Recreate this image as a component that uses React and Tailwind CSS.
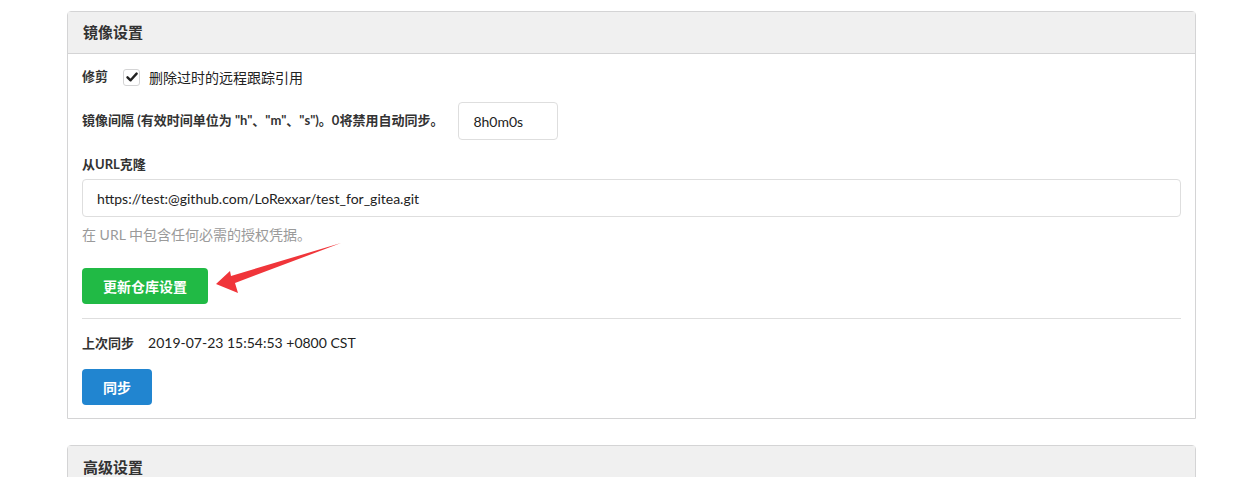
import React from "react";

const font = { fontFamily: "Lato, 'Noto Sans CJK SC', sans-serif" };

function Check() {
  return (
    <span className="flex h-[17px] w-[17px] items-center justify-center rounded-[3px] border border-[#d4d4d5] bg-white">
      <svg width="12" height="12" viewBox="0 0 12 12">
        <path d="M1.5 6.3 L4.6 9.3 L10.6 2.6" fill="none" stroke="#222" strokeWidth="2.4" strokeLinecap="round" strokeLinejoin="round" />
      </svg>
    </span>
  );
}

export default function App() {
  return (
    <div className="relative min-h-[477px] bg-white pl-[67px] pr-[51px] pt-[11px] text-[#333]" style={font}>
      <div className="rounded-t-[4px] border border-[#d4d4d5]">
        <div className="flex h-[42px] items-center border-b border-[#d4d4d5] bg-[#f0f0f0] px-[15px] text-[15px] font-bold">
          镜像设置
        </div>
        <div className="flex flex-col px-[14px] pb-[13px] pt-[13px]">
          <div className="flex h-[20px] items-center text-[13px]">
            <span className="font-bold">修剪</span>
            <span className="ml-[15px]"><Check /></span>
            <span className="ml-[9px] text-[14px] text-[#222]">删除过时的远程跟踪引用</span>
          </div>
          <div className="mt-[15px] flex items-center">
            <span className="text-[13px] font-bold">镜像间隔 (有效时间单位为 "h"、"m"、"s")。0将禁用自动同步。</span>
            <div className="ml-[15px] flex h-[38px] w-[100px] items-center rounded-[4px] border border-[#dedede] px-[14px] text-[14px] text-[#222]">
              8h0m0s
            </div>
          </div>
          <div className="mt-[16px] text-[13px] font-bold leading-[16px]">从URL克隆</div>
          <div className="mt-[7px] flex h-[38px] items-center rounded-[4px] border border-[#dedede] px-[14px] text-[14px] text-[#222]">
            https://test:@github.com/LoRexxar/test_for_gitea.git
          </div>
          <div className="mt-[10px] text-[14px] leading-[16px] text-[#9a9a9a]">在 URL 中包含任何必需的授权凭据。</div>
          <div className="mt-[25px]">
            <button className="flex h-[36px] w-[126px] items-center justify-center rounded-[4px] bg-[#21ba45] text-[14px] font-bold text-white">
              更新仓库设置
            </button>
          </div>
          <div className="mt-[14px] border-t border-[#dedede]"></div>
          <div className="mt-[16px] flex items-center leading-[16px]">
            <span className="text-[13px] font-bold">上次同步</span>
            <span className="ml-[14px] text-[14px] text-[#222]">2019-07-23 15:54:53 +0800 CST</span>
          </div>
          <div className="mt-[18px]">
            <button className="flex h-[36px] w-[70px] items-center justify-center rounded-[4px] bg-[#2185d0] text-[14px] font-bold text-white">
              同步
            </button>
          </div>
        </div>
      </div>
      <div className="mt-[26px] rounded-t-[4px] border border-[#d4d4d5]">
        <div className="flex h-[43px] items-center bg-[#f0f0f0] px-[15px] text-[15px] font-bold">
          高级设置
        </div>
      </div>
      <svg className="pointer-events-none absolute left-0 top-0" width="1247" height="477">
        <polygon points="216,284 230,271 231,276 341,243 235,283 238,293" fill="#f0353a" />
      </svg>
    </div>
  );
}
